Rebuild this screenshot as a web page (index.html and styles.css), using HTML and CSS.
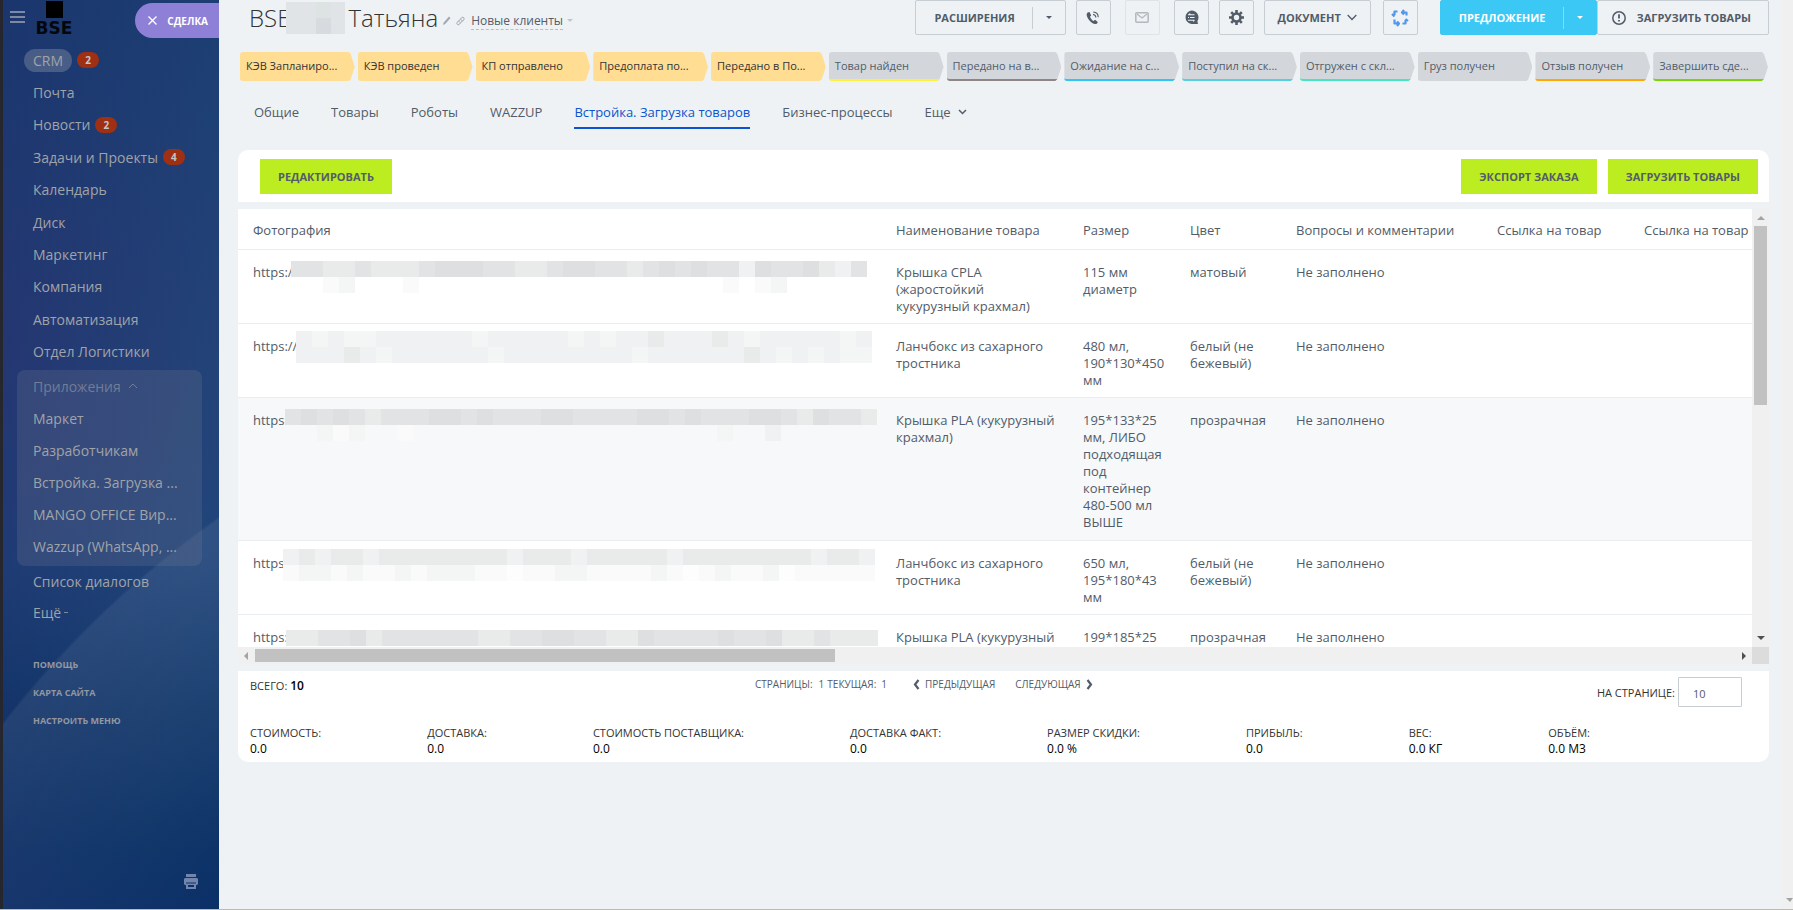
FILE: index.html
```html
<!DOCTYPE html>
<html lang="ru">
<head>
<meta charset="utf-8">
<title>BSE Татьяна — Сделка</title>
<link rel="stylesheet" href="styles.css">
</head>
<body>
<div class="app">
  <aside class="sidebar">
    <div class="brand">
      <button class="burger" aria-label="Меню"><span></span><span></span><span></span></button>
      <div class="logo"><span class="logo-mark"></span><span class="logo-name">BSE</span></div>
      <button class="deal-label"><svg width="9" height="9" viewBox="0 0 9 9"><path d="M.5.5l8 8M8.500.5l-8 8" stroke="#fff" stroke-width="1.3" fill="none"/></svg>СДЕЛКА</button>
    </div>
    <nav class="menu">
      <ul class="menu-list menu-main">
        <li><a class="current" href="#">CRM</a><span class="badge">2</span></li>
        <li><a href="#">Почта</a></li>
        <li><a href="#">Новости</a><span class="badge">2</span></li>
        <li><a href="#">Задачи и Проекты</a><span class="badge">4</span></li>
        <li><a href="#">Календарь</a></li>
        <li><a href="#">Диск</a></li>
        <li><a href="#">Маркетинг</a></li>
        <li><a href="#">Компания</a></li>
        <li><a href="#">Автоматизация</a></li>
        <li><a href="#">Отдел Логистики</a></li>
      </ul>
      <ul class="menu-list menu-group">
        <li class="group-title"><a href="#">Приложения</a><svg width="10" height="6" viewBox="0 0 10 6"><path d="M1 5l4-4 4 4" stroke="currentColor" fill="none"/></svg></li>
        <li><a href="#">Маркет</a></li>
        <li><a href="#">Разработчикам</a></li>
        <li><a href="#">Встройка. Загрузка ...</a></li>
        <li><a href="#">MANGO OFFICE Вир...</a></li>
        <li><a href="#">Wazzup (WhatsApp, ...</a></li>
      </ul>
      <ul class="menu-list menu-rest">
        <li><a href="#">Список диалогов</a></li>
        <li><a href="#">Ещё</a><span class="more-dash"></span></li>
      </ul>
      <ul class="menu-service">
        <li><a href="#">ПОМОЩЬ</a></li>
        <li><a href="#">КАРТА САЙТА</a></li>
        <li><a href="#">НАСТРОИТЬ МЕНЮ</a></li>
      </ul>
    </nav>
    <button class="print" aria-label="Печать"><svg width="14" height="15" viewBox="0 0 14 15"><path fill="#7285ac" d="M2 0h10v3H2zM1 4h12l1 1v5l-1 1h-1V8.500H2V11H1l-1-1V5zM2 9.500h10V15H2zM4 11v2h6v-2z" fill-rule="evenodd"/></svg></button>
  </aside>

  <main class="main">
    <header class="head">
      <h1 class="title">BSE<span class="title-mask"><i></i><i></i><i></i><i></i><i></i><i></i><i></i><i></i></span>Татьяна</h1>
      <svg class="ico-edit" width="8" height="9" viewBox="0 0 8 9"><path d="M0 9l.6-2.300L6 .6 7.500 2 2.200 8z" fill="#a1a8b0"/></svg>
      <svg class="ico-link" width="9" height="10" viewBox="0 0 9 10"><path d="M3.600 6.400C2.600 5.500 3 4.800 3.600 4.100l2-2.400c1.300-1.300 3.300.3 2.200 1.900L6.300 5.500M5.300 3.600c1 .8.700 1.600.1 2.300l-2 2.400C2.200 9.600.2 8.100 1.200 6.500l1.500-1.900" fill="none" stroke="#9aa1aa"/></svg>
      <a class="funnel" href="#">Новые клиенты</a>
      <span class="tri tri-down tri-pale"></span>
      <div class="tools">
        <button class="btn btn-ext">РАСШИРЕНИЯ<span class="split"><span class="tri tri-down"></span></span></button>
        <button class="btn btn-icon gap-s" aria-label="Звонок"><svg width="14" height="14" viewBox="0 0 14 14"><path d="M3.600 1.200C2.800.8 1 1.800.7 3.200c-.6 3 4.800 10 8.700 9.900 1.400 0 2.400-1.500 2.300-2.200L9.100 8.800 7.500 10C6.300 9.500 4.500 7.300 4 5.700l1.200-1.200z" fill="#525c69"/><path d="M7 3.500c1.700.2 2.800 1.500 2.900 3M7.200 1c3 .2 5 2.400 5 5.200" fill="none" stroke="#525c69" stroke-width="1.100"/></svg></button>
        <button class="btn btn-icon btn-off gap-m" aria-label="Письмо" disabled><svg width="14" height="11" viewBox="0 0 14 11"><rect x=".8" y=".8" width="12.400" height="9.400" rx="1" fill="none" stroke="#b4b8bd" stroke-width="1.500"/><path d="M2 2l5 4 5-4" fill="none" stroke="#b4b8bd" stroke-width="1.300"/></svg></button>
        <button class="btn btn-icon gap-m" aria-label="Чат"><svg width="15" height="15" viewBox="0 0 15 15"><path d="M7.500.5a7 7 0 0 1 5.900 10.700L14 14H7.500a6.800 6.800 0 0 1 0-13.500z" fill="#525c69"/><path d="M4 4.800h6.500M5 4.800l1.300-1.300M6 7.500h4.500M4 10.200h6.500M9.300 11.500l1.200-1.300M4 7.500h1" stroke="#eef2f4" stroke-width="1.100" fill="none"/></svg></button>
        <button class="btn btn-icon gap-s" aria-label="Настройки"><svg width="15" height="15" viewBox="0 0 15 15"><circle cx="7.500" cy="7.500" r="4" fill="none" stroke="#525c69" stroke-width="2.600"/><path d="M7.500 0v3M7.500 12v3M0 7.500h3M12 7.500h3M2.200 2.200l2 2M10.800 10.800l2 2M12.800 2.200l-2 2M4.200 10.800l-2 2" stroke="#525c69" stroke-width="2.600"/></svg></button>
        <button class="btn btn-doc gap-s">ДОКУМЕНТ<svg width="10" height="7" viewBox="0 0 10 7"><path d="M.7 1l4.300 4.500L9.300 1" fill="none" stroke="#525c69" stroke-width="1.300"/></svg></button>
        <button class="btn btn-icon gap-l" aria-label="Обновить"><svg width="18" height="18" viewBox="0 0 18 18"><path d="M6.500 2.500H3.500v3.500M1 5l2.500 2.500M11.500 3.500h4v3M13 1l-2 2.500 2 2M14.500 11v3.500h-3M17 12l-2.500-2M3.500 10.500v4h4M6 17l2-2.500-2-2" fill="none" stroke="#5496ea" stroke-width="2.200" stroke-linejoin="round"/></svg></button>
        <button class="btn btn-offer">ПРЕДЛОЖЕНИЕ<span class="split"><span class="tri tri-down"></span></span></button>
        <button class="btn btn-load"><svg width="14" height="14" viewBox="0 0 14 14"><circle cx="7" cy="7" r="6.200" fill="none" stroke="#525c69" stroke-width="1.500"/><path d="M7 3.300v4.200M7 8.900v1.700" stroke="#525c69" stroke-width="1.800"/></svg>ЗАГРУЗИТЬ ТОВАРЫ</button>
      </div>
    </header>

    <ol class="stages">
      <li class="done"><span>КЭВ Запланиро...</span></li>
      <li class="done"><span>КЭВ проведен</span></li>
      <li class="done"><span>КП отправлено</span></li>
      <li class="done"><span>Предоплата по...</span></li>
      <li class="done"><span>Передано в По...</span></li>
      <li class="c-yellow"><span>Товар найден</span></li>
      <li class="c-brown"><span>Передано на в...</span></li>
      <li class="c-blue"><span>Ожидание на с...</span></li>
      <li class="c-cyan"><span>Поступил на ск...</span></li>
      <li class="c-mint"><span>Отгружен с скл...</span></li>
      <li><span>Груз получен</span></li>
      <li class="c-orange"><span>Отзыв получен</span></li>
      <li class="c-green"><span>Завершить сде...</span></li>
    </ol>

    <nav class="tabs">
      <a href="#">Общие</a>
      <a href="#">Товары</a>
      <a href="#">Роботы</a>
      <a href="#">WAZZUP</a>
      <a class="active" href="#">Встройка. Загрузка товаров</a>
      <a href="#">Бизнес-процессы</a>
      <a href="#">Еще<svg width="9" height="6" viewBox="0 0 9 6"><path d="M1 1l3.500 3.500L8 1" fill="none" stroke="#525c69" stroke-width="1.500"/></svg></a>
    </nav>

    <section class="actions">
      <button class="lime">РЕДАКТИРОВАТЬ</button>
      <div class="actions-right">
        <button class="lime">ЭКСПОРТ ЗАКАЗА</button>
        <button class="lime">ЗАГРУЗИТЬ ТОВАРЫ</button>
      </div>
    </section>

    <section class="grid">
      <div class="grid-view">
        <table class="goods">
          <colgroup><col class="w-photo"><col class="w-name"><col class="w-size"><col class="w-color"><col class="w-note"><col class="w-link"><col class="w-link2"></colgroup>
          <thead>
            <tr><th>Фотография</th><th>Наименование товара</th><th>Размер</th><th>Цвет</th><th>Вопросы и комментарии</th><th>Ссылка на товар</th><th>Ссылка на товар от поставщика</th></tr>
          </thead>
          <tbody>
            <tr>
              <td>https://<div class="mask m1" data-rows="bbccbcccbaaabbccbaabbcbababbdabbacdb,..fe...f...................f.fe....."></div></td>
              <td>Крышка CPLA (жаростойкий кукурузный крахмал)</td><td>115 мм диаметр</td><td>матовый</td><td>Не заполнено</td><td></td><td></td>
            </tr>
            <tr>
              <td>https://c<div class="mask m2" data-rows="dedeeddddddedddddededdcdddcdeddddded,dddcdeddddddeddddddddeddddddcdededee"></div></td>
              <td>Ланчбокс из сахарного тростника</td><td>480 мл, 190*130*450 мм</td><td>белый (не бежевый)</td><td>Не заполнено</td><td></td><td></td>
            </tr>
            <tr class="shade">
              <td>https://<div class="mask m3" data-rows="bababcbbbaababbbaabbbbaababbbaabcabbc,..efe..f...................e..d......"></div></td>
              <td>Крышка PLA (кукурузный крахмал)</td><td>195*133*25 мм, ЛИБО подходящая под контейнер 480-500 мл ВЫШЕ</td><td>прозрачная</td><td>Не заполнено</td><td></td><td></td>
            </tr>
            <tr>
              <td>https://<div class="mask m4" data-rows="dcdccdccccccccdcccdcccccdccccccccdccd,feefeffefeeeffgffeeffffefgfeffegfffff"></div></td>
              <td>Ланчбокс из сахарного тростника</td><td>650 мл, 195*180*43 мм</td><td>белый (не бежевый)</td><td>Не заполнено</td><td></td><td></td>
            </tr>
            <tr>
              <td>https://<div class="mask m5" data-rows="ccbbacbbbbbbccbbaabbccabbbbabbaccbccc"></div></td>
              <td>Крышка PLA (кукурузный крахмал)</td><td>199*185*25 мм</td><td>прозрачная</td><td>Не заполнено</td><td></td><td></td>
            </tr>
          </tbody>
        </table>
      </div>
      <div class="vbar"><span class="tri tri-up"></span><span class="vthumb"></span><span class="tri tri-down"></span></div>
      <div class="hbar"><span class="tri tri-left"></span><span class="hrail"><span class="hthumb"></span></span><span class="tri tri-right"></span></div>
      <div class="corner"></div>
    </section>

    <section class="summary">
      <div class="pager">
        <div class="total">ВСЕГО: <b>10</b></div>
        <div class="pages">
          <span>СТРАНИЦЫ:</span><b>1</b><span>ТЕКУЩАЯ:</span><span class="page-now">1</span>
          <button class="prev"><svg width="7" height="11" viewBox="0 0 7 11"><path d="M5.500 1L2 5.500 5.500 10" fill="none" stroke="#525c69" stroke-width="2.200"/></svg>ПРЕДЫДУЩАЯ</button>
          <button class="next">СЛЕДУЮЩАЯ<svg width="7" height="11" viewBox="0 0 7 11"><path d="M1.500 1L5 5.500 1.500 10" fill="none" stroke="#525c69" stroke-width="2.200"/></svg></button>
        </div>
        <div class="per-page"><label for="per">НА СТРАНИЦЕ:</label><input id="per" type="text" value="10"></div>
      </div>
      <dl class="sums">
        <div><dt>СТОИМОСТЬ:</dt><dd>0.0</dd></div>
        <div><dt>ДОСТАВКА:</dt><dd>0.0</dd></div>
        <div><dt>СТОИМОСТЬ ПОСТАВЩИКА:</dt><dd>0.0</dd></div>
        <div><dt>ДОСТАВКА ФАКТ:</dt><dd>0.0</dd></div>
        <div><dt>РАЗМЕР СКИДКИ:</dt><dd>0.0 %</dd></div>
        <div><dt>ПРИБЫЛЬ:</dt><dd>0.0</dd></div>
        <div><dt>ВЕС:</dt><dd>0.0 КГ</dd></div>
        <div><dt>ОБЪЁМ:</dt><dd>0.0 М3</dd></div>
      </dl>
    </section>
  </main>
  <div class="page-bar"><span class="tri tri-down"></span></div>
</div>
<script src="mask.js"></script>
</body>
</html>
```

FILE: styles.css
```css
* { box-sizing: border-box; }
body {
  margin: 0;
  font-family: "Open Sans", "Noto Sans", sans-serif;
  font-size: 13px;
  color: #525c69;
  background: #eef2f4;
}
button, input { font: inherit; color: inherit; }
button { cursor: pointer; }
a { color: inherit; text-decoration: none; }
ul, ol, dl, dd { margin: 0; padding: 0; list-style: none; }

.app { display: flex; min-height: 100vh; border-bottom: 1px solid #bdb9b3; }

/* Sidebar */
.sidebar {
  display: flex;
  flex-direction: column;
  flex: 0 0 219px;
  border-left: 3px solid #26262e;
  color: #a0a3a8;
  background:
    radial-gradient(circle 1001px at 790px 1336px, rgba(255,255,255,0) 70%, rgba(255,255,255,.07) 99.700%, rgba(255,255,255,0) 100%),
    radial-gradient(circle 300px at 0 340px, rgba(45,45,110,.38), rgba(45,45,110,0)),
    linear-gradient(100deg, rgba(20,20,90,.25), rgba(20,20,90,0) 80%),
    linear-gradient(180deg, #1d4174 0%, #22477a 40%, #20457a 62%, #143a6c 78%, #0a3166 94%, #0b2f66 100%);
}
.brand { display: flex; height: 44px; }
.burger {
  display: flex; flex-direction: column; gap: 3px;
  width: 15px; height: 12px; margin: 11px 0 0 7px; padding: 0; border: 0; background: none;
}
.burger span { flex: 0 0 2px; width: 15px; background: #7f88a3; }
.logo { display: flex; flex-direction: column; align-items: center; width: 44px; margin-left: 7px; color: #05070d; }
.logo-mark { width: 17px; height: 17px; margin-top: 1px; background: #000; }
.logo-name { margin-top: 1px; font: bold 17px/18px "DejaVu Sans", sans-serif; }
.deal-label {
  display: flex; align-items: center; gap: 10px;
  height: 35px; margin: 3px 0 0 auto; padding: 0 11px 0 13px;
  border: 0; border-radius: 18px 0 0 18px; background: #8f80d7;
  color: #fff; font-size: 10px; font-weight: 700;
}
.menu-list { display: grid; grid-auto-rows: 1fr; font-size: 14px; }
.menu-list li { display: flex; align-items: center; padding-left: 30px; }
.menu-main { min-height: 324px; }
.menu-main .current { margin-left: -9px; padding: 0 9px; line-height: 23px; border-radius: 12px; background: rgba(140,150,170,.4); }
.badge {
  width: 22px; margin-left: 5px; border-radius: 9px;
  background: #9f3013; color: #c3c6c9;
  font-size: 10px; font-weight: 700; line-height: 16px; text-align: center;
}
.menu-group { min-height: 196px; margin: 2px 17px 0 14px; padding-bottom: 3px; border-radius: 8px; background: rgba(120,125,145,.23); }
.menu-group li { padding-left: 16px; }
.group-title { gap: 7px; color: #6f7d97; }
.menu-rest { min-height: 62px; }
.more-dash { width: 4px; height: 1px; margin-left: 3px; background: #7d8aa3; }
.menu-service { margin-top: 23px; }
.menu-service li { padding-left: 30px; font-size: 9px; font-weight: 700; line-height: 28px; color: #9297a1; }
.print { margin: auto 21px 20px auto; padding: 0; border: 0; background: none; line-height: 0; }

/* Header */
.main { flex: 1; min-width: 0; padding: 0 13px 0 19px; }
.head { display: flex; align-items: center; height: 35px; padding-left: 11px; white-space: nowrap; }
.title { display: flex; align-items: center; margin: 0; font-size: 24px; font-weight: 300; line-height: 35px; color: #333; }
.title-mask { display: grid; grid-template-columns: repeat(4, 1fr); width: 59px; height: 32px; margin: 0 3px 0 -4px; }
.title-mask i { background: #e0e4e7; }
.title-mask i:nth-child(3) { background: #dde2e3; }
.title-mask i:nth-child(7) { background: #d7dbdf; }
.ico-edit { margin: 6px 5px 0 5px; }
.ico-link { margin-top: 6px; }
.funnel { margin: 7px 4px 0 6px; font-size: 12px; line-height: 16px; border-bottom: 1px dashed #b9bfc5; }

.tri { flex: none; width: 0; height: 0; border: 3px solid transparent; }
.tri-down { border-top-color: currentColor; border-bottom: 0; }
.tri-up { border-bottom-color: currentColor; border-top: 0; }
.tri-left { border-right-color: currentColor; border-left: 0; }
.tri-right { border-left-color: currentColor; border-right: 0; }
.tri-pale { margin-top: 6px; color: #c0c5ca; }

.tools { display: flex; margin-left: auto; }
.btn {
  display: flex; align-items: center; justify-content: center;
  height: 35px; padding: 0; border: 1px solid #c6cdd3; border-radius: 2px; background: none;
  font-size: 11px; font-weight: 700;
}
.btn-icon { width: 35px; }
.btn-off { border-color: #dfe3e6; }
.gap-s { margin-left: 10px; }
.gap-m { margin-left: 14px; }
.gap-l { margin-left: 12px; }
.split { display: flex; align-items: center; justify-content: center; width: 33px; height: 22px; margin-left: 17px; border-left: 1px solid #c6cdd3; }
.btn-ext { padding-left: 18px; }
.btn-doc { gap: 6px; width: 107px; }
.btn-offer { margin-left: 22px; padding-left: 18px; border-color: #3bc8f5; background: #3bc8f5; color: #fff; }
.btn-offer .split { border-color: #80dcf8; }
.btn-load { gap: 11px; padding: 0 17px 0 14px; }

/* Stages */
.stages { display: flex; gap: 3px; margin: 17px 1px 0 2px; }
.stages li {
  flex: 1; min-width: 0; height: 29px; padding: 0 14px 0 6px;
  border-bottom: 2px solid #d3d7dc; border-radius: 3px 0 0 3px; background: #d3d7dc;
  clip-path: polygon(0 0, calc(100% - 6px) 0, calc(100% - 4px) 2px, 100% 15px, calc(100% - 4px) 27px, calc(100% - 6px) 100%, 0 100%);
  font-size: 11px; line-height: 28px; white-space: nowrap; color: #525c69;
}
.stages .done { border-color: #ffdd93; background: #ffdd93; color: #333; }
.stages .c-yellow { border-color: #fff03c; }
.stages .c-brown { border-color: #8e8586; }
.stages .c-blue { border-color: #2fc6f6; }
.stages .c-cyan { border-color: #55d0e0; }
.stages .c-mint { border-color: #47e4c2; }
.stages .c-orange { border-color: #ffa900; }
.stages .c-green { border-color: #7bd500; }

/* Tabs */
.tabs { display: flex; gap: 32px; margin: 17px 0 0 16px; font-weight: 500; }
.tabs a { display: flex; align-items: center; gap: 7px; height: 31px; padding-bottom: 1px; border-bottom: 2px solid transparent; }
.tabs .active { color: #0b54ce; border-color: #0b54ce; }

/* Action bar */
.actions { display: flex; justify-content: space-between; margin-top: 21px; padding: 9px 11px 8px 22px; border-radius: 10px 10px 0 0; background: #fff; }
.actions-right { display: flex; gap: 11px; }
.lime { height: 35px; padding: 0 18px; border: 0; background: #bbed21; font-size: 11px; font-weight: 700; color: #535c69; }

/* Goods table with its scroll rails */
.grid { display: grid; grid-template-columns: minmax(0, 1fr) 17px; grid-template-rows: 438px 17px; margin-top: 7px; }
.grid-view { overflow: hidden; background: #fff; }
.goods { width: 3863px; table-layout: fixed; border-collapse: separate; border-spacing: 0; line-height: 17px; }
.w-photo { width: 643px; }
.w-name { width: 187px; }
.w-size { width: 107px; }
.w-color { width: 106px; }
.w-note { width: 201px; }
.w-link { width: 147px; }
.goods th { height: 41px; padding: 3px 0 0 15px; font-weight: 400; text-align: left; border-bottom: 1px solid #eaedef; }
.goods td { position: relative; padding: 14px 10px 8px 15px; vertical-align: top; border-bottom: 1px solid #eaedef; }
.goods .shade td { padding-bottom: 9px; }
.shade { background: #f6f8f9; }
.mask { position: absolute; top: 11px; left: 53px; z-index: 1; }
.mask div { display: flex; height: 16px; }
.mask i { flex: 0 0 16px; }
.m2 { top: 7px; left: 58px; }
.m3 { left: 47px; }
.m4 { top: 8px; left: 45px; }
.m5 { top: 15px; left: 48px; }
.t-a { background: #dddfe1; }
.t-b { background: #e2e3e4; }
.t-c { background: #e9eaea; }
.t-d { background: #f0f1f2; }
.t-e { background: #f4f5f5; }
.t-f { background: #f9faf9; }
.t-g { background: #fcfdfc; }

.vbar { display: flex; flex-direction: column; align-items: center; padding: 7px 0; background: #f0f0f0; color: #505050; }
.vbar .tri, .hbar .tri { border-width: 4px; }
.vbar .tri-up { border-top: 0; color: #a3a3a3; }
.vbar .tri-down { border-bottom: 0; margin-top: auto; }
.vthumb { width: 13px; height: 179px; margin-top: 6px; background: #c1c1c1; }
.hbar { display: flex; align-items: center; padding: 0 6px; background: #f0f0f0; color: #505050; }
.hbar .tri-left { border-left: 0; color: #a3a3a3; }
.hbar .tri-right { border-right: 0; }
.hrail { flex: 1; margin: 0 7px; }
.hthumb { display: block; width: 39.2%; height: 13px; background: #c1c1c1; }
.corner { background: #dcdcdc; }

/* Summary */
.summary { margin-top: 7px; padding: 6px 12px 5px; border-radius: 0 0 10px 10px; background: #fff; color: #333; font-size: 11px; }
.pager { display: grid; grid-template-columns: 505px 1fr auto; align-items: start; }
.total { line-height: 18px; }
.total b { font-size: 12px; font-weight: 600; color: #000; }
.pages { display: flex; align-items: center; font-size: 10px; line-height: 14px; color: #525c69; }
.pages b { margin: 0 3px 0 6px; font-weight: 500; }
.page-now { margin-left: 5px; }
.pages button { display: flex; align-items: center; gap: 5px; padding: 0; border: 0; background: none; }
.prev { margin-left: 26px; }
.next { margin-left: 20px; }
.per-page { display: flex; align-items: center; gap: 3px; margin-right: 15px; }
.per-page input { width: 64px; height: 30px; padding: 2px 14px 0; border: 1px solid #c6cdd3; border-radius: 1px; background: #fff; color: #525c69; }
.sums { display: flex; gap: 106px; margin-top: 18px; white-space: nowrap; line-height: 16px; }
.sums dd { font-size: 12px; color: #000; font-weight: 500; }

.page-bar { display: flex; align-items: flex-end; justify-content: flex-end; flex: 0 0 11px; padding-bottom: 7px; overflow: hidden; background: #f0f0f0; color: #a3a3a3; }
.page-bar .tri { border-left-width: 4px; border-top-width: 4px; }
```

FILE: mask.js
```js
// Builds the mosaic strips that hide private links: one letter per tile, "." is empty.
document.querySelectorAll('.mask').forEach(function (mask) {
  mask.dataset.rows.split(',').forEach(function (row) {
    var line = document.createElement('div');
    row.split('').forEach(function (tone) {
      var tile = document.createElement('i');
      if (tone !== '.') tile.className = 't-' + tone;
      line.appendChild(tile);
    });
    mask.appendChild(line);
  });
});
```
